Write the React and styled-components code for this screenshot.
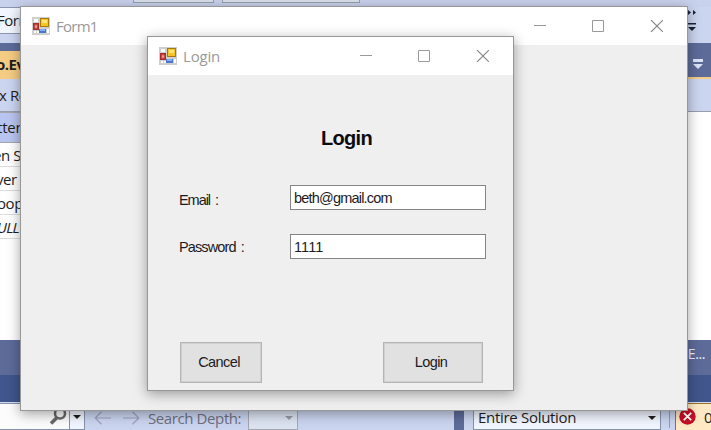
import React from "react";
import styled, { createGlobalStyle, css } from "styled-components";

const Global = createGlobalStyle`
  *, *::before, *::after { box-sizing: border-box; }
  body { margin: 0; overflow: hidden; background: #fff; }
`;

const ideFont = css`font-family: "Open Sans", "Noto Sans", sans-serif;`;
const formFont = css`font-family: "Liberation Sans", Arial, sans-serif;`;

const Desktop = styled.div`
  position: relative;
  width: 711px;
  height: 430px;
  overflow: hidden;
  ${ideFont}
  font-size: 15px;
  color: #1e1e1e;
`;

const Ide = styled.div`
  display: flex;
  flex-direction: column;
  height: 430px;
`;

const Band = styled.div`
  display: flex;
  flex: none;
  justify-content: space-between;
  height: ${(p) => p.$h}px;
  background: ${(p) => p.$bg};
  overflow: hidden;
`;

const ToolStrip = styled(Band)`
  justify-content: flex-start;
  gap: 8px;
  padding-left: 133px;
`;

const StripBox = styled.div`
  width: ${(p) => p.$w}px;
  height: 3px;
  background: #d9e1ee;
  border: 1px solid #999ea8;
  border-top: 0;
`;

const EdgeCell = styled.div`
  width: ${(p) => p.$w || 21}px;
  height: ${(p) => p.$h}px;
  line-height: ${(p) => p.$lh || p.$h - 2}px;
  background: ${(p) => p.$bg || "transparent"};
  overflow: hidden;
  white-space: nowrap;
  border: 0 solid ${(p) => p.$line || "#a0a6b4"};
  border-width: ${(p) => p.$bw || "0"};
  font-weight: ${(p) => (p.$bold ? 700 : 400)};
  font-style: ${(p) => (p.$italic ? "italic" : "normal")};
  letter-spacing: ${(p) => p.$ls || 0}px;
  text-indent: ${(p) => p.$shift || 0}px;
`;

const Glyph = styled.svg`
  display: block;
  flex: none;
  margin: ${(p) => p.$m || "0"};
`;

const PanelTitle = styled.div`
  padding: 4px 6px 0 0;
  color: #eef1fa;
  font-size: 14px;
  line-height: 20px;
  letter-spacing: -0.4px;
`;

const SearchBar = styled(Band)`
  justify-content: flex-start;
`;

const SearchInput = styled.div`
  display: flex;
  flex: none;
  width: 85px;
  height: 27px;
  background: #fcfcfc;
  border: 1px solid #8591ad;
  border-left: 0;
`;

const SearchDrop = styled.div`
  width: 15px;
  height: 25px;
  background: #f2f6ff;
  border-left: 1px solid #8591ad;
`;

const DepthLabel = styled.span`
  flex: none;
  width: 108px;
  padding-left: 8px;
  line-height: 31px;
  color: #6d7082;
  letter-spacing: -0.4px;
  white-space: nowrap;
`;

const Combo = styled.div`
  display: flex;
  flex: none;
  justify-content: space-between;
  width: ${(p) => p.$w}px;
  height: 27px;
  margin-right: ${(p) => p.$after || 0}px;
  padding-left: 4px;
  background: ${(p) => p.$bg};
  border: 1px solid ${(p) => p.$line};
  line-height: 27px;
  letter-spacing: -0.3px;
`;

const Divider = styled.div`
  flex: none;
  width: 10px;
  height: 27px;
  margin-right: 9px;
  background: #5d6b99;
`;

const Separator = styled.div`
  flex: none;
  width: 1px;
  height: 25px;
  margin: 0 5px 0 8px;
  background: #8e9bbd;
`;

const ErrorCount = styled.div`
  display: flex;
  flex: 1;
  height: 30px;
  background: #ffe9c5;
  border: 1px solid #9a7127;
  border-right: 0;
  line-height: 27px;
`;

const Window = styled.section`
  position: absolute;
  left: ${(p) => p.$x}px;
  top: ${(p) => p.$y}px;
  width: ${(p) => p.$w}px;
  height: ${(p) => p.$h}px;
  background: #efefef;
  border: 1px solid #979797;
  box-shadow: 0 3px 12px rgba(0, 0, 0, 0.36);
`;

const TitleBar = styled.header`
  display: flex;
  align-items: center;
  height: 38px;
  padding-left: 11px;
  background: #fff;
  color: #999;
`;

const Title = styled.h1`
  flex: 1;
  margin: -1px 0 0 6px;
  font-size: 15px;
  font-weight: 400;
  line-height: 20px;
  letter-spacing: ${(p) => p.$ls}px;
`;

const Controls = styled.div`
  display: flex;
  gap: 46px;
  margin-right: 24px;
`;

const Form = styled.form`
  display: flex;
  flex-direction: column;
  padding: 50px 27px 0 31px;
  ${formFont}
  color: #1b1b24;
`;

const Heading = styled.h2`
  margin: 0 0 33px 142px;
  font-size: 20px;
  line-height: 27px;
  letter-spacing: -0.7px;
  color: #0c0c10;
`;

const Field = styled.label`
  display: grid;
  grid-template-columns: 111px 196px;
  height: 49px;
  font-size: 14.5px;
`;

const FieldName = styled.span`
  padding-top: ${(p) => p.$drop}px;
  line-height: 17px;
  letter-spacing: ${(p) => p.$ls}px;
  word-spacing: 2px;
`;

const Input = styled.input`
  width: 196px;
  height: 25px;
  padding: 0 3px;
  background: #fff;
  border: 1px solid #858585;
  outline: 0;
  border-radius: 0;
  ${formFont}
  font-size: 14.5px;
  letter-spacing: ${(p) => p.$ls}px;
  color: #1b1b24;
`;

const Buttons = styled.div`
  display: flex;
  justify-content: space-between;
  margin: 59px 3px 0 1px;
`;

const Button = styled.button`
  width: ${(p) => p.$w}px;
  height: 41px;
  padding: 0 4px 1px 0;
  background: #e1e1e1;
  border: 1px solid #b5b5b5;
  box-shadow: inset 0 0 0 1px #d0d0d0;
  ${formFont}
  font-size: 14.5px;
  letter-spacing: ${(p) => p.$ls}px;
  color: #1b1b24;
`;

const AppIcon = () => (
  <Glyph width="18" height="18" viewBox="0 0 18 18">
    <path fill="#cfcfcf" d="M0 0h18v18H0z" />
    <path fill="#fff" d="M2 2h4v3H2zM2 14h2v2H2zM5 14h2v2H5zM15 12h2v4h-2z" />
    <path fill="#a92e29" d="M1 6h6v7H1z" />
    <path fill="#df6b60" d="M2.5 7.5h3v4h-3z" />
    <path fill="#ead0cd" d="M3.5 8.5h1v2h-1z" />
    <path fill="#a67a10" d="M8 1h9v9H8z" />
    <path fill="#f7c51f" d="M9 2h7v7H9z" />
    <path fill="#ffe477" d="M10 3h5v3h-5z" />
    <path fill="#4a76cb" d="M7 12h7v4H7z" />
    <path fill="#82b0f7" d="M8 12h5v2H8z" />
  </Glyph>
);

const WindowControls = () => (
  <Controls>
    <Glyph width="12" height="12"><path d="M0 5.500h12" stroke="#999" /></Glyph>
    <Glyph width="12" height="12"><path d="M.5 .5h11v11H.5z" fill="none" stroke="#999" /></Glyph>
    <Glyph width="13" height="12"><path d="M1 0l12 12M13 0L1 12" fill="none" stroke="#858585" strokeWidth="1.100" /></Glyph>
  </Controls>
);

const Arrow = ({ color = "#1e1e1e", m }) => (
  <Glyph width="8" height="4" $m={m}><path d="M0 0h8L4 4z" fill={color} /></Glyph>
);

const NavArrow = ({ back, m }) => (
  <Glyph width="17" height="14" $m={m}>
    <path
      d={back ? "M17 7H1M7.500 .8L1.200 7l6.300 6.200" : "M0 7h16M9.500 .8L15.800 7l-6.300 6.200"}
      fill="none"
      stroke="#9aa2bd"
      strokeWidth="1.200"
    />
  </Glyph>
);

const ROWS = [
  { text: "en S", shift: -7, ls: -0.4 },
  { text: "ver", shift: -4, ls: -0.4 },
  { text: "oop", shift: -3, ls: -0.4 },
  { text: "NULL", shift: -13, italic: true, ls: -0.8 },
];

export default function App() {
  return (
    <Desktop>
      <Global />
      <Ide>
        <ToolStrip $h={7} $bg="#c9d2ed">
          <StripBox $w={81} />
          <StripBox $w={138} />
        </ToolStrip>
        <Band $h={36} $bg="#ccd5f0">
          <EdgeCell $h={27} $bg="#f2f6ff" $bw="1px 0" $shift={-3} $ls={-0.5} $line="#8c96ad">Form</EdgeCell>
          <Glyph width="23" height="36">
            <path d="M0 3l3 2.500L0 8zM5 3l3 2.500L5 8zM0 16h8v1.500H0zM0 20h8l-4 4z" fill="#1a2238" />
          </Glyph>
        </Band>
        <Band $h={36} $bg="#5d6b99">
          <EdgeCell $h={36} $lh={27} $bw="8px 0 0" $bg="#f5cc84" $line="#5d6b99" $bold $shift={-4} $ls={-0.5}>o.Ev</EdgeCell>
          <EdgeCell $h={36} $w={24} $bw="0 0 2px" $line="#f5cc84">
            <Glyph width="24" height="34">
              <path d="M6 16h10v3H6zM6 21h10l-5 5z" fill="#dbe3f7" />
            </Glyph>
          </EdgeCell>
        </Band>
        <Band $h={33} $bg="#ccd5f0">
          <EdgeCell $h={33} $lh={33} $w={711} $bw="0 0 1px" $line="#9a9fae" $ls={-0.4} $shift={-1}>x Re</EdgeCell>
        </Band>
        <Band $h={31} $bg="#fff">
          <EdgeCell $h={31} $bw="1px 0" $bg="#b9c5f1" $line="#a5a5ac" $shift={-3} $ls={-0.2}>tten</EdgeCell>
        </Band>
        {ROWS.map((r) => (
          <Band $h={24} $bg="#fff" key={r.text}>
            <EdgeCell $h={24} $lh={24} $bw="0 0 1px" $line="#ddd" $shift={r.shift} $italic={r.italic} $ls={r.ls}>{r.text}</EdgeCell>
          </Band>
        ))}
        <Band $h={101} $bg="#fff" />
        <Band $h={35} $bg="#5d6b99">
          <span />
          <PanelTitle>E...</PanelTitle>
        </Band>
        <Band $h={27} $bg="#40568d" />
        <Band $h={1} $bg="#d4dcf2" />
        <SearchBar $h={27} $bg="#ccd5f0">
          <SearchInput>
            <Glyph width="69" height="25">
              <circle cx="60" cy="9.500" r="5" fill="none" stroke="#686868" strokeWidth="2.500" />
              <path d="M57 13.500l-6 6" stroke="#686868" strokeWidth="3.500" />
            </Glyph>
            <SearchDrop><Arrow m="11px 0 0 3px" /></SearchDrop>
          </SearchInput>
          <NavArrow back m="8px 0 0 9px" />
          <NavArrow m="8px 0 0 12px" />
          <DepthLabel>Search Depth:</DepthLabel>
          <Combo $w={50} $after={156} $bg="#dce4f2" $line="#a2a7b3">
            <span />
            <Arrow color="#969ba8" m="12px 4px 0 0" />
          </Combo>
          <Divider />
          <Combo $w={188} $bg="#f2f6ff" $line="#8591ad">
            <span>Entire Solution</span>
            <Arrow m="12px 4px 0 0" />
          </Combo>
          <Separator />
          <ErrorCount>
            <Glyph width="17" height="17" $m="4px 8px 0 3px">
              <circle cx="8.500" cy="8.500" r="8.200" fill="#c50f25" />
              <path d="M4.800 4.800l7.400 7.400M12.200 4.800l-7.400 7.400" stroke="#fff" strokeWidth="1.800" />
            </Glyph>
            0
          </ErrorCount>
        </SearchBar>
      </Ide>

      <Window $x={20} $y={6} $w={668} $h={405}>
        <TitleBar>
          <AppIcon />
          <Title $ls={-0.75}>Form1</Title>
          <WindowControls />
        </TitleBar>
      </Window>

      <Window $x={147} $y={36} $w={367} $h={355}>
        <TitleBar>
          <AppIcon />
          <Title $ls={-0.2}>Login</Title>
          <WindowControls />
        </TitleBar>
        <Form onSubmit={(e) => e.preventDefault()}>
          <Heading>Login</Heading>
          <Field>
            <FieldName $drop={7} $ls={-1.05}>Email :</FieldName>
            <Input $ls={-0.8} defaultValue="beth@gmail.com" />
          </Field>
          <Field>
            <FieldName $drop={5} $ls={-0.88}>Password :</FieldName>
            <Input $ls={0.1} defaultValue="1111" />
          </Field>
          <Buttons>
            <Button type="button" $w={82} $ls={-0.6}>Cancel</Button>
            <Button type="submit" $w={100} $ls={-0.6}>Login</Button>
          </Buttons>
        </Form>
      </Window>
    </Desktop>
  );
}
